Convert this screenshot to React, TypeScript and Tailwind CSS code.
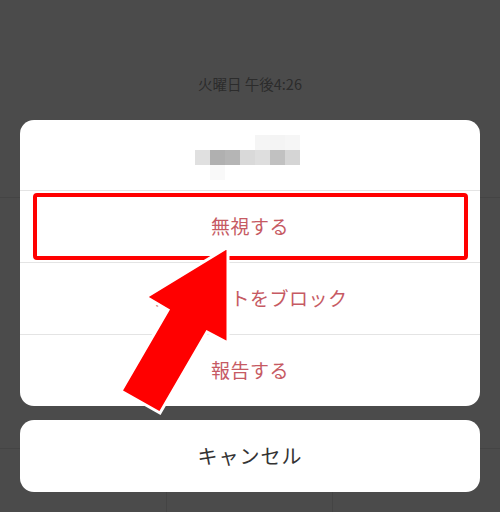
import React from 'react';

const blurRows: string[][] = [
    ['#ffffff', '#ffffff', '#ffffff', '#ffffff', '#f5f5f5', '#f4f4f4', '#f6f6f6'],
    ['#e0e0e0', '#b0b0b0', '#b5b5b5', '#d9d9d9', '#dedede', '#c1c1c1', '#d5d5d5'],
    ['#ffffff', '#f9f9f9', '#ffffff', '#ffffff', '#ffffff', '#ffffff', '#ffffff'],
];

const ActionRow = ({ label, first }: { label: string; first?: boolean }) => (
    <div className="h-[72px] border-t border-[#e4e4e4] flex items-center justify-center relative">
        {first && (
            <div className="absolute left-[13px] right-[12px] top-[2px] bottom-[2px] border-4 border-[#ff0000] rounded-[4px]"></div>
        )}
        <span className="text-[19px] text-[#c65a63] tracking-[0.5px]">{label}</span>
    </div>
);

export default function App() {
    return (
        <div
            className="w-[500px] h-[512px] relative overflow-hidden bg-[#4b4b4b]"
            style={{ fontFamily: '"Noto Sans CJK JP", "Noto Sans", sans-serif' }}
        >
            {/* background chat screen */}
            <div className="flex flex-col h-full">
                <div className="h-[198px] border-b border-[#444444] flex justify-center pt-[73px]">
                    <span className="text-[14.5px] text-[#2c2c2c]">火曜日 午後4:26</span>
                </div>
                <div className="flex-1"></div>
                <div className="h-[64px] border-t border-[#444444] grid grid-cols-3">
                    <div className="border-r border-[#444444]"></div>
                    <div className="border-r border-[#444444]"></div>
                    <div></div>
                </div>
            </div>

            {/* action sheet */}
            <div className="absolute inset-0 flex flex-col px-5 pt-[120px]">
                <div className="bg-white rounded-[14px] overflow-hidden">
                    <div className="h-[70px] flex items-start justify-center pt-[15px] pr-[5px]">
                        <div className="flex flex-col">
                            {blurRows.map((row, i) => (
                                <div key={i} className="flex">
                                    {row.map((c, j) => (
                                        <div key={j} className="w-[15px] h-[15px]" style={{ backgroundColor: c }}></div>
                                    ))}
                                </div>
                            ))}
                        </div>
                    </div>
                    <ActionRow label="無視する" first />
                    <ActionRow label="アカウントをブロック" />
                    <ActionRow label="報告する" />
                </div>
                <div className="mt-[14px] h-[72px] bg-white rounded-[14px] flex items-center justify-center">
                    <span className="text-[20px] text-[#333333] tracking-[1px]">キャンセル</span>
                </div>
            </div>

            {/* annotation arrow */}
            <svg className="absolute inset-0 pointer-events-none" width="500" height="512" viewBox="0 0 500 512">
                <polygon
                    points="228,247 146,297 168,310 121,391 160,413 207,332 228,343"
                    fill="#ff0000"
                    stroke="#ffffff"
                    strokeWidth="3"
                    strokeLinejoin="miter"
                />
            </svg>
        </div>
    );
}
